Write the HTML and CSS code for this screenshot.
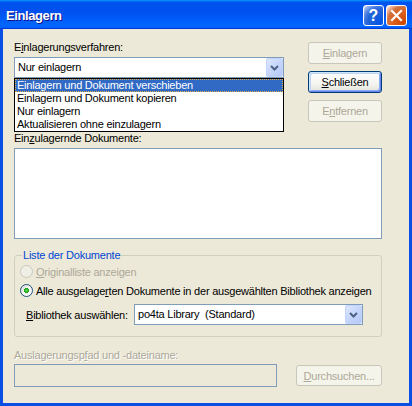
FILE: index.html
```html
<!DOCTYPE html>
<html lang="de">
<head>
<meta charset="utf-8">
<title>Einlagern</title>
<link rel="stylesheet" href="styles.css">
</head>
<body>
<div class="window">
  <div class="titlebar">
    <span class="title">Einlagern</span>
    <div class="caption-btns">
      <span class="cbtn help">?</span>
      <span class="cbtn close">
        <svg width="19" height="19" viewBox="0 0 19 19"><path d="M5 5 L14 14 M14 5 L5 14" stroke="#fff" stroke-width="2.2" stroke-linecap="square" fill="none"/></svg>
      </span>
    </div>
  </div>
  <div class="client">
    <div class="top">
      <div class="left">
        <div class="label">E<u>i</u>nlagerungsverfahren:</div>
        <div class="combo method">
          <span class="combo-text">Nur einlagern</span>
          <span class="combo-btn"><svg width="15" height="17" viewBox="0 0 15 17"><path d="M4 7 L7.5 10.5 L11 7" stroke="#4D6185" stroke-width="2" fill="none"/></svg></span>
          <ul class="dropdown">
            <li class="sel">Einlagern und Dokument verschieben</li>
            <li>Einlagern und Dokument kopieren</li>
            <li>Nur einlagern</li>
            <li>Aktualisieren ohne einzulagern</li>
          </ul>
        </div>
      </div>
      <div class="buttons">
        <button class="btn disabled"><u>E</u>inlagern</button>
        <button class="btn default"><u>S</u>chließen</button>
        <button class="btn disabled">E<u>n</u>tfernen</button>
      </div>
    </div>
    <div class="label docs-label">Ein<u>z</u>ulagernde Dokumente:</div>
    <div class="listbox"></div>
    <fieldset class="group">
      <legend>Liste der Dokumente</legend>
      <div class="radio-row disabled-text">
        <span class="radio off"></span><span><u>O</u>riginalliste anzeigen</span>
      </div>
      <div class="radio-row">
        <span class="radio on"></span><span>Alle ausgelage<u>r</u>ten Dokumente in der ausgewählten Bibliothek anzeigen</span>
      </div>
      <div class="lib-row">
        <span class="lib-label"><u>B</u>ibliothek auswählen:</span>
        <div class="combo lib">
          <span class="combo-text">po4ta Library&nbsp; (Standard)</span>
          <span class="combo-btn"><svg width="15" height="17" viewBox="0 0 15 17"><path d="M4 7 L7.5 10.5 L11 7" stroke="#4D6185" stroke-width="2" fill="none"/></svg></span>
        </div>
      </div>
    </fieldset>
    <div class="label path-label disabled-text">Auslagerungsp<u>f</u>ad und -dateiname:</div>
    <div class="path-row">
      <div class="textbox"></div>
      <button class="btn disabled browse"><u>D</u>urchsuchen...</button>
    </div>
  </div>
</div>
</body>
</html>
```
FILE: styles.css
```css
* { box-sizing: border-box; }
html, body { margin: 0; padding: 0; }
body {
  width: 412px;
  height: 406px;
  overflow: hidden;
  background: #fff;
  font-family: "Liberation Sans", Arial, sans-serif;
  font-size: 11px;
  letter-spacing: -0.22px;
  color: #000;
}
u { text-decoration-thickness: 1px; text-underline-offset: 1px; }

.window {
  width: 412px;
  height: 406px;
  display: flex;
  flex-direction: column;
}

.titlebar {
  height: 29px;
  flex: none;
  display: flex;
  justify-content: space-between;
  align-items: flex-start;
  padding: 0 5px 0 6px;
  background: linear-gradient(180deg, #0997ff, #0053ee 8%, #0050ee 40%, #0066ff 88%, #0066ff 93%, #005bff 95%, #003dd7 96%, #003dd7);
}
.title {
  margin-top: 8px;
  font-weight: bold;
  font-size: 13px;
  line-height: 15px;
  color: #fff;
  text-shadow: 1px 1px #0f1089;
  letter-spacing: -0.4px;
}
.caption-btns {
  display: flex;
  gap: 2px;
  margin-top: 5px;
}
.cbtn {
  width: 21px;
  height: 21px;
  border: 1px solid #fff;
  border-radius: 3px;
  display: flex;
  align-items: center;
  justify-content: center;
}
.help {
  background: radial-gradient(circle at 90% 90%, #0054e9 0%, #2263d5 55%, #4479e4 70%, #a3bbec 90%, #fff 100%);
  color: #fff;
  font-weight: bold;
  font-size: 16px;
  line-height: 1;
  letter-spacing: 0;
}
.close {
  background: radial-gradient(circle at 90% 90%, #cc4600 0%, #dc6527 55%, #cd7546 70%, #ffccb2 90%, #fff 100%);
}

.client {
  flex: 1;
  background: #ece9d8;
  border: 3px solid #0a4ee4;
  border-top: 0;
  padding: 12px 0 0 11px;
}

.label {
  height: 13px;
  line-height: 13px;
  white-space: nowrap;
}

.top {
  display: flex;
  gap: 24px;
}
.left { width: 270px; }

.combo {
  position: relative;
  height: 21px;
  background: #fff;
  border: 1px solid #7f9db9;
  display: flex;
  align-items: center;
  justify-content: space-between;
  padding-left: 3px;
}
.method { margin-top: 3px; }
.combo-text { white-space: nowrap; line-height: 13px; }
.combo-btn {
  width: 17px;
  height: 19px;
  border: 1px solid #c3d3fd;
  border-radius: 2px;
  background: linear-gradient(135deg, #dde7fd 0%, #c6d6fb 50%, #b4c8f7 100%);
  display: flex;
  align-items: center;
  justify-content: center;
}

.dropdown {
  position: absolute;
  left: -1px;
  top: 20px;
  width: 270px;
  margin: 0;
  padding: 0;
  list-style: none;
  background: #fff;
  border: 1px solid #000;
  z-index: 2;
}
.dropdown li {
  height: 13px;
  line-height: 13px;
  padding-left: 2px;
  white-space: nowrap;
}
.dropdown li.sel {
  background: #316ac5;
  color: #fff;
  outline: 1px dotted #e8b04a;
  outline-offset: -1px;
}

.buttons {
  display: flex;
  flex-direction: column;
  gap: 7px;
  margin-top: 1px;
}
.btn {
  width: 74px;
  height: 22px;
  padding: 0;
  font-family: "Liberation Sans", Arial, sans-serif;
  font-size: 11px;
  letter-spacing: -0.22px;
  border-radius: 3px;
  border: 1px solid #003c74;
  background: linear-gradient(180deg, #fff 0%, #f4f4f0 60%, #e3e2da 100%);
  color: #000;
}
.btn.default {
  box-shadow: inset 1px 1px 0 #cee7ff, inset -1px -1px 0 #6982ee, inset 2px 2px 0 #bcd4f6, inset -2px -2px 0 #89adf4;
}
.btn.disabled {
  border-color: #c9c7ba;
  background: #f5f4ea;
  color: #aca899;
}

.docs-label { margin-top: 10px; }
.listbox {
  margin-top: 3px;
  width: 368px;
  height: 91px;
  background: #fff;
  border: 1px solid #7f9db9;
}

.group {
  margin: 10px 0 0 0;
  width: 368px;
  min-width: 0;
  border: 1px solid #d0d0bf;
  border-radius: 3px;
  padding: 0 0 11px 5px;
}
.group legend {
  margin-left: 2px;
  padding: 0 1px;
  height: 13px;
  line-height: 13px;
  color: #0046d5;
}

.radio-row {
  height: 19px;
  display: flex;
  align-items: center;
  gap: 2px;
  white-space: nowrap;
}
.radio {
  width: 13px;
  height: 13px;
  border-radius: 50%;
  flex: none;
  margin-right: 1px;
}
.radio.off {
  border: 1px solid #cac8bb;
  background: #f0efe6;
}
.radio.on {
  border: 1px solid #1c5180;
  background: radial-gradient(circle at 50% 50%, #5be05a 0%, #28b228 22%, #1a9a1a 30%, rgba(255,255,255,0) 32%),
              linear-gradient(135deg, #dcdad5 0%, #f4f3ee 50%, #fff 100%);
}
.disabled-text {
  color: #aca899;
}
.path-label { text-shadow: 1px 1px #fff; }

.lib-row {
  display: flex;
  align-items: center;
  margin: 4px 0 0 6px;
}
.lib-label {
  width: 108px;
  white-space: nowrap;
}
.lib { width: 229px; }

.path-label { margin-top: 12px; }
.path-row {
  margin-top: 2px;
  display: flex;
  align-items: center;
  gap: 19px;
}
.textbox {
  width: 263px;
  height: 23px;
  border: 1px solid #7f9db9;
  background: #ece9d8;
}
.btn.browse {
  width: 86px;
  height: 21px;
}
```
